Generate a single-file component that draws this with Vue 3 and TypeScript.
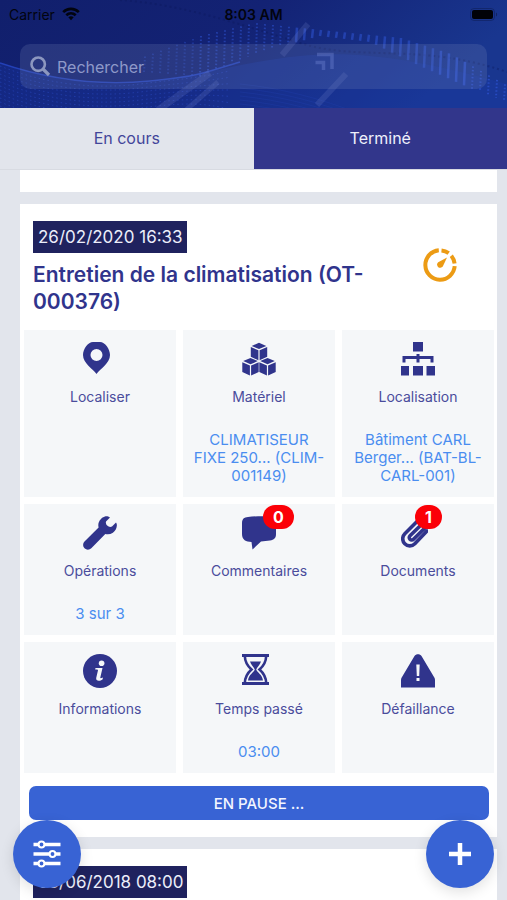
<script setup lang="ts">
import { computed, ref } from 'vue'

type IconName =
  | 'pin' | 'cubes' | 'sitemap' | 'wrench' | 'comment'
  | 'clip' | 'info' | 'hourglass' | 'warning'

interface Tile {
  icon: IconName
  label: string
  value?: string
  badge?: number
}

const tabs = ['En cours', 'Terminé']
const activeTab = ref('Terminé')
const query = ref('')

const tiles: Tile[] = [
  { icon: 'pin', label: 'Localiser' },
  { icon: 'cubes', label: 'Matériel', value: 'CLIMATISEUR FIXE 250... (CLIM-001149)' },
  { icon: 'sitemap', label: 'Localisation', value: 'Bâtiment CARL Berger... (BAT-BL-CARL-001)' },
  { icon: 'wrench', label: 'Opérations', value: '3 sur 3' },
  { icon: 'comment', label: 'Commentaires', badge: 0 },
  { icon: 'clip', label: 'Documents', badge: 1 },
  { icon: 'info', label: 'Informations' },
  { icon: 'hourglass', label: 'Temps passé', value: '03:00' },
  { icon: 'warning', label: 'Défaillance' },
]

const narrow: IconName[] = ['pin', 'clip', 'hourglass']
const glyphWidth = (name: IconName): number => (narrow.includes(name) ? 27 : 34)

interface Streak { x: number; top: number; bottom: number; opacity: number; dotted: boolean }

function mix(points: [number, number][], x: number): number {
  for (let i = 1; i < points.length; i++) {
    const [x0, y0] = points[i - 1]
    const [x1, y1] = points[i]
    if (x <= x1) return y0 + ((y1 - y0) * (x - x0)) / (x1 - x0)
  }
  return points[points.length - 1][1]
}

// Vertical streaks of the header wave
const streaks = computed<Streak[]>(() => {
  const top: [number, number][] = [[140, 58], [200, 36], [254, 23], [290, 27], [340, 32], [400, 38], [450, 54], [507, 86]]
  const bottom: [number, number][] = [[140, 72], [200, 76], [254, 54], [290, 44], [320, 36], [370, 42], [420, 66], [470, 88], [507, 102]]
  const out: Streak[] = []
  for (let x = 144; x < 507; x += 8) {
    out.push({
      x,
      top: mix(top, x),
      bottom: mix(bottom, x),
      opacity: x < 200 ? 0.35 : x < 440 ? 0.5 : 0.6,
      dotted: x < 290 || x > 465,
    })
  }
  return out
})

// Dotted mesh underneath the wave line
const mesh = computed<string[]>(() =>
  Array.from({ length: 13 }, (_, i) => {
    const d = 3 + i * 4
    return `M0 ${63 + d} C50 ${83 + d} 100 ${86 + d} 140 ${81 + d} S200 ${75 + d} 230 ${66 + d * 1.6}`
  }),
)
</script>

<template>
  <div class="app">
    <header class="hero">
      <svg class="art" viewBox="0 0 507 108" preserveAspectRatio="none" aria-hidden="true">
        <defs>
          <linearGradient id="heroBg" x1="0" y1="0" x2="1" y2="0.25">
            <stop offset="0" stop-color="#111f6c" />
            <stop offset="0.5" stop-color="#132274" />
            <stop offset="1" stop-color="#19368f" />
          </linearGradient>
        </defs>
        <rect width="507" height="108" fill="url(#heroBg)" />
        <path d="M0 63C50 80 100 88 150 82S240 62 300 56 420 60 507 84V108H0Z" fill="#1a38a8" opacity=".35" />
        <path v-for="(d, i) in mesh" :key="i" :d="d" fill="none" stroke="#2e50cf" stroke-width="1" stroke-dasharray="1.5 3" opacity=".45" />
        <path d="M0 63C50 80 100 86 150 81S200 74 240 62" fill="none" stroke="#2848c8" stroke-width="1.5" opacity=".8" />
        <path d="M120 0C180 4 240 24 300 43S420 42 507 72" fill="none" stroke="#0c1858" stroke-width="2" stroke-dasharray="2 3" opacity=".35" />
        <path v-for="i in 6" :key="'r' + i" :d="`M240 ${80 + i * 4}C280 ${84 + i * 4} 320 ${94 + i * 4} 360 ${110 + i * 4}`" fill="none" stroke="#2544b8" stroke-width="1" opacity=".25" />
        <line
          v-for="s in streaks" :key="s.x"
          :x1="s.x + 1" :y1="s.top" :x2="s.x" :y2="s.bottom"
          stroke="#3158dc" :stroke-width="s.dotted ? 2 : 2.5" :opacity="s.opacity"
          :stroke-dasharray="s.dotted ? '1.5 2' : undefined"
        />
        <g stroke="#8796dc" fill="none" opacity=".17">
          <path d="M158 110L210 73" stroke-width="7" />
          <path d="M186 110L218 82" stroke-width="5" />
          <path d="M282 55L308 24" stroke-width="6" />
          <path d="M317 105L346 74" stroke-width="6" />
        </g>
      </svg>

      <div class="status">
        <span class="carrier">
          Carrier
          <svg width="18" height="14" viewBox="0 0 18 14" aria-hidden="true">
            <g fill="none" stroke="#02040f" stroke-width="2.6">
              <path d="M1.2 5.2C5.5.8 12.5.8 16.800 5.200" />
              <path d="M4.300 8.300C7 5.700 11 5.700 13.700 8.300" />
            </g>
            <path d="M6.300 10.300C8 8.900 10 8.900 11.700 10.300L9 13.200Z" fill="#02040f" />
          </svg>
        </span>
        <span class="clock">8:03 AM</span>
        <span class="battery">
          <svg width="28" height="13" viewBox="0 0 28 13" aria-hidden="true">
            <rect x=".5" y=".5" width="24" height="12" rx="3.500" fill="none" stroke="#0a1238" opacity=".35" />
            <rect x="2" y="2" width="21" height="9" rx="2" fill="#010208" />
            <path d="M26 4.500C27.500 5 27.500 8 26 8.500Z" fill="#0a1238" opacity=".5" />
          </svg>
        </span>
      </div>

      <label class="search">
        <svg width="21" height="21" viewBox="0 0 21 21" fill="none" stroke="#8c97bf" aria-hidden="true">
          <circle cx="8.200" cy="8.200" r="6.700" stroke-width="2.600" />
          <path d="M13 13L19 19" stroke-width="3.200" />
        </svg>
        <input v-model="query" type="search" placeholder="Rechercher" aria-label="Rechercher" />
      </label>
      <svg class="art over" viewBox="0 0 507 108" preserveAspectRatio="none" aria-hidden="true">
        <path d="M317 54.500H332V69M315.500 62.500H323.500V70" fill="none" stroke="#7f93e0" stroke-width="3.500" opacity=".32" />
      </svg>
    </header>

    <nav class="tabs" role="tablist">
      <button
        v-for="tab in tabs" :key="tab" type="button" role="tab"
        :aria-selected="tab === activeTab"
        :class="['tab', { active: tab === activeTab }]"
        @click="activeTab = tab"
      >{{ tab }}</button>
    </nav>

    <main class="list">
      <article class="card previous"></article>

      <article class="card">
        <div class="head">
          <div class="heading">
            <time class="chip">26/02/2020 16:33</time>
            <h2>Entretien de la climatisation (OT-000376)</h2>
          </div>
          <svg class="gauge" width="34" height="34" viewBox="0 0 34 34" aria-hidden="true">
            <g fill="none" stroke="#ec9b14" stroke-width="4">
              <path d="M15.800 2.300A14.700 14.700 0 1 0 31.700 18.200" />
              <path d="M18.500 2.400A14.700 14.700 0 0 1 25.700 5.100" />
              <path d="M28.300 7.700A14.700 14.700 0 0 1 31.600 15.500" />
            </g>
            <path d="M24 9.500L19.800 18.600A3.200 3.200 0 1 1 15.200 14.200Z" fill="#ec9b14" />
          </svg>
        </div>

        <div class="grid">
          <button v-for="tile in tiles" :key="tile.label" type="button" class="tile">
            <span class="icon">
              <span class="glyph">
                <svg :width="glyphWidth(tile.icon)" height="34" :viewBox="`0 0 ${glyphWidth(tile.icon)} 34`" fill="#30348c" aria-hidden="true">
                  <path
                    v-if="tile.icon === 'pin'" fill-rule="evenodd"
                    d="M13.500 32C10 27 0 21 0 13C0 7 5 0 10 0H17C22 0 27 7 27 13C27 21 17 27 13.500 32ZM13.500 7A6 6 0 1 0 13.500 19A6 6 0 1 0 13.500 7Z"
                  />
                  <template v-else-if="tile.icon === 'cubes'">
                    <g v-for="p in [[8.5, 0.8], [0, 16], [17, 16]]" :key="p.join()" :transform="`translate(${p[0]} ${p[1]})`">
                      <path d="M8.500 0L15.800 3.100L8.500 6.300L1.200 3.100ZM.3 4.300L7.900 7.500V17.500L.3 14ZM16.700 4.300L9.100 7.500V17.500L16.700 14Z" />
                    </g>
                  </template>
                  <path
                    v-else-if="tile.icon === 'sitemap'"
                    d="M12 0H22V9.500H12ZM15.500 12H18.500V14H32.500V20.500H29.500V17H18.500V20.500H15.500V17H4.500V20.500H1.500V14H15.500ZM0 24H8V33.500H0ZM12 24H22V33.500H12ZM25.500 24H34V33.500H25.500Z"
                  />
                  <path
                    v-else-if="tile.icon === 'wrench'"
                    d="M27 1.500C25.500.3 24 0 22.500.2A9.200 9.200 0 0 0 15.600 11.500L1.500 25.500A4.800 4.800 0 0 0 8.300 32.300L22.300 18A9.200 9.200 0 0 0 33.800 10C34 8.500 33.800 7.500 33 6.500L29 10.500C26 12 22 9 23 5.500Z"
                  />
                  <path
                    v-else-if="tile.icon === 'comment'"
                    d="M6 1C12 .2 22 0 29 .5C32 .8 34 3 34 6V18C34 22 32 24 28 24.500L19 25.500L10.500 33.500L9.500 26C4 25.800 0 24 0 18V7C0 3 2 1.300 6 1Z"
                  />
                  <path
                    v-else-if="tile.icon === 'clip'" fill="none" stroke="#30348c" stroke-width="3.600" stroke-linecap="round"
                    d="M26 15L13.800 27.800A7 7 0 0 1 3.800 17.800L17.500 4A5 5 0 0 1 24.600 11.200L12.500 23.300A2.500 2.500 0 0 1 9 19.700L18.500 10.500"
                  />
                  <template v-else-if="tile.icon === 'info'">
                    <circle cx="17" cy="17" r="17" />
                    <circle cx="18.600" cy="9.300" r="2.800" fill="#f5f7f9" />
                    <path d="M12.500 14H19.500L17.300 23.500C17.200 24.300 17.600 24.400 20 23.600L19.500 25.500C17 27.300 12.600 27.500 13.200 24L15 16.300C14.800 15.600 13.600 15.600 12.200 15.600Z" fill="#f5f7f9" />
                  </template>
                  <template v-else-if="tile.icon === 'hourglass'">
                    <path d="M0 0H27V3H0ZM0 28H27V31H0Z" />
                    <path d="M2.800 2C3 8 5.500 12 9.500 15.500C5.500 19 3 23 2.800 29M24.200 2C24 8 21.500 12 17.500 15.500C21.500 19 24 23 24.200 29" fill="none" stroke="#30348c" stroke-width="2.600" />
                    <path d="M8 7.500H19C18 11 15.500 12.800 14.200 15.500C15.500 19 20 20 21 26.500H6C7 20 11.500 19 12.800 15.500C11.500 12.800 9 11 8 7.500Z" />
                  </template>
                  <template v-else>
                    <path d="M13.500 2C15-.3 19-.3 20.500 2L33 23C34 24.500 34 25.500 34 27V33.500H0V27C0 25.500 0 24.500 1 23Z" />
                    <path d="M15.300 10.500H18.700L18.200 22H15.800ZM15.500 24H18.500V27H15.500Z" fill="#f5f7f9" />
                  </template>
                </svg>
                <span v-if="tile.badge !== undefined" class="badge">{{ tile.badge }}</span>
              </span>
            </span>
            <span class="label">{{ tile.label }}</span>
            <span v-if="tile.value" class="value">{{ tile.value }}</span>
          </button>
        </div>

        <button type="button" class="pause">EN PAUSE ...</button>
      </article>

      <article class="card">
        <div class="head">
          <div class="heading">
            <time class="chip">05/06/2018 08:00</time>
          </div>
        </div>
      </article>
    </main>

    <button type="button" class="fab left" aria-label="Filtrer">
      <svg width="28" height="28" viewBox="0 0 28 28" fill="none" stroke="#fff" aria-hidden="true">
        <path d="M.5 4.500H27.500M.5 14H27.500M.5 23.500H27.500" stroke-width="3.600" />
        <g fill="#3863d4" stroke-width="2">
          <circle cx="8.500" cy="4.500" r="2.900" />
          <circle cx="19.500" cy="14" r="2.900" />
          <circle cx="8.500" cy="23.500" r="2.900" />
        </g>
      </svg>
    </button>
    <button type="button" class="fab right" aria-label="Ajouter">
      <svg width="24" height="24" viewBox="0 0 24 24" aria-hidden="true">
        <path d="M12 1V23M1 12H23" stroke="#fff" stroke-width="4.500" />
      </svg>
    </button>
  </div>
</template>

<style>
body {
  background: #e2e5ec;
}
</style>

<style scoped>
.app {
  display: flex;
  flex-direction: column;
  height: 100vh;
  overflow: hidden;
  background: #e2e5ec;
  color: #30348c;
  font-family: Inter, 'Liberation Sans', sans-serif;
}
.app * {
  box-sizing: border-box;
}
button,
input {
  margin: 0;
  padding: 0;
  border: 0;
  font-family: inherit;
}
button {
  cursor: pointer;
}
.hero {
  position: relative;
  flex: none;
  padding-bottom: 19px;
}
.art {
  position: absolute;
  inset: 0;
  width: 100%;
  height: 100%;
}
.over {
  pointer-events: none;
}
.status {
  position: relative;
  display: grid;
  grid-template-columns: 1fr auto 1fr;
  align-items: center;
  height: 28px;
  padding: 0 9px;
  color: #02040f;
  font-size: 14px;
}
.carrier {
  display: flex;
  align-items: center;
  gap: 7px;
}
.clock {
  font-size: 14px;
  font-weight: 600;
}
.battery {
  display: flex;
  justify-content: flex-end;
}
.search {
  position: relative;
  display: flex;
  align-items: center;
  gap: 6px;
  height: 45px;
  margin: 16px 20px 0;
  padding: 0 10px;
  border-radius: 10px;
  background: rgba(130, 145, 190, 0.2);
}
.search input {
  flex: 1;
  min-width: 0;
  background: transparent;
  outline: none;
  appearance: none;
  color: #a9b1d6;
  font-size: 16px;
}
.search input::placeholder {
  color: #8e99c9;
  opacity: 1;
}
.tabs {
  display: flex;
  flex: none;
  height: 62px;
}
.tab {
  flex: 1;
  padding-bottom: 2px;
  background: #e2e5ec;
  border-bottom: 1px solid #d8dbe2;
  color: #42459a;
  font-size: 16px;
}
.tab.active {
  background: #32368b;
  color: #eef0fb;
}
.list {
  display: flex;
  flex: 1;
  flex-direction: column;
  gap: 12px;
  min-height: 0;
  padding: 0 10px 0 20px;
  overflow-y: auto;
  scrollbar-width: none;
}
.card {
  flex: none;
  padding-bottom: 17px;
  background: #fff;
}
.previous {
  padding-bottom: 22px;
}
.head {
  display: flex;
  align-items: center;
  justify-content: space-between;
  gap: 24px;
  padding: 17px 40px 15px 13px;
}
.heading {
  display: flex;
  flex-direction: column;
  align-items: flex-start;
  gap: 8px;
}
.chip {
  padding: 0 4px 0 5px;
  background: #1f225e;
  color: #eceefa;
  font-size: 17px;
  line-height: 32px;
  white-space: nowrap;
}
h2 {
  margin: 0;
  font-size: 21px;
  font-weight: 600;
  line-height: 27px;
}
.gauge {
  flex: none;
  margin-bottom: 6px;
}
.grid {
  display: grid;
  grid-template-columns: repeat(3, minmax(0, 1fr));
  gap: 7px;
  padding: 0 3px 0 4px;
}
.tile {
  display: flex;
  flex-direction: column;
  align-items: center;
  min-height: 131px;
  padding: 12px 10px;
  background: #f5f7f9;
  color: #4a4c9c;
}
.icon {
  display: flex;
  width: 34px;
  height: 34px;
}
.glyph {
  position: relative;
  display: block;
  height: 34px;
}
.glyph svg {
  display: block;
}
.badge {
  position: absolute;
  top: -11px;
  left: calc(100% - 13px);
  padding: 0 10px;
  border-radius: 12px;
  background: #fb0007;
  color: #fff;
  font-size: 16px;
  font-weight: 700;
  line-height: 24px;
}
.label {
  margin-top: 11px;
  font-size: 14px;
  line-height: 20px;
}
.value {
  margin-top: 24px;
  color: #4a8df0;
  font-size: 15px;
  line-height: 18px;
}
.pause {
  display: block;
  width: calc(100% - 17px);
  height: 34px;
  margin: 13px 8px 0 9px;
  border-radius: 7px;
  background: #3863d4;
  color: #f3f6ff;
  font-size: 15px;
  font-weight: 500;
}
.fab {
  position: fixed;
  bottom: 12px;
  display: flex;
  align-items: center;
  justify-content: center;
  width: 68px;
  height: 68px;
  border-radius: 50%;
  background: #3863d4;
  box-shadow: 0 4px 14px rgba(0, 0, 0, 0.12);
}
.left {
  left: 13px;
}
.right {
  right: 13px;
}
</style>
